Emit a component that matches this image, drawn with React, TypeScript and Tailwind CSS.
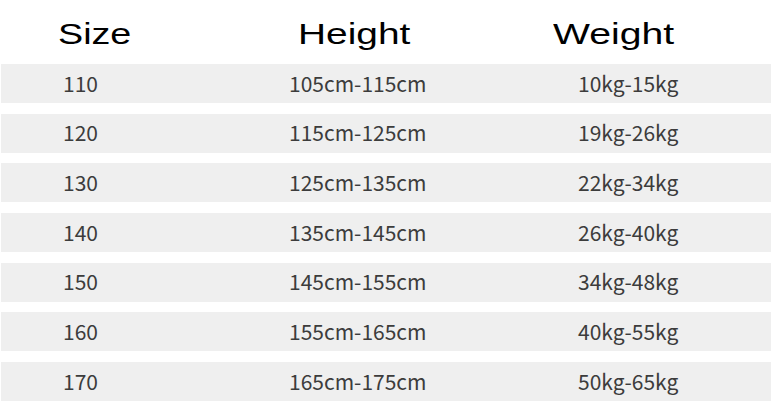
const rows = [
  ["110", "105cm-115cm", "10kg-15kg"],
  ["120", "115cm-125cm", "19kg-26kg"],
  ["130", "125cm-135cm", "22kg-34kg"],
  ["140", "135cm-145cm", "26kg-40kg"],
  ["150", "145cm-155cm", "34kg-48kg"],
  ["160", "155cm-165cm", "40kg-55kg"],
  ["170", "165cm-175cm", "50kg-65kg"],
];

export default function App() {
  return (
    <div className="w-[774px] h-[406px] bg-white overflow-hidden">
      {/* Header */}
      <div className="h-[64px] flex pt-[20px] pl-[58px] text-[29px] leading-[29px] text-black font-['Liberation_Sans',Arial,sans-serif]">
        <div className="w-[240px]">
          <span className="inline-block origin-left scale-x-[1.3]">Size</span>
        </div>
        <div className="w-[255px]">
          <span className="inline-block origin-left scale-x-[1.34]">Height</span>
        </div>
        <div>
          <span className="inline-block origin-left scale-x-[1.35]">Weight</span>
        </div>
      </div>

      {/* Rows */}
      <div className="flex flex-col gap-[10.67px] pl-[1px] pr-[3px]">
        {rows.map(([size, height, weight]) => (
          <div
            key={size}
            className="h-[39px] bg-[#efefef] flex items-center text-[21px] text-[#3c3c3c] font-['Noto_Sans_CJK_SC','Noto_Sans',sans-serif]"
          >
            <div className="w-[226px] pl-[62px]">{size}</div>
            <div className="w-[351px] pl-[62px]">{height}</div>
            <div>{weight}</div>
          </div>
        ))}
      </div>
    </div>
  );
}
